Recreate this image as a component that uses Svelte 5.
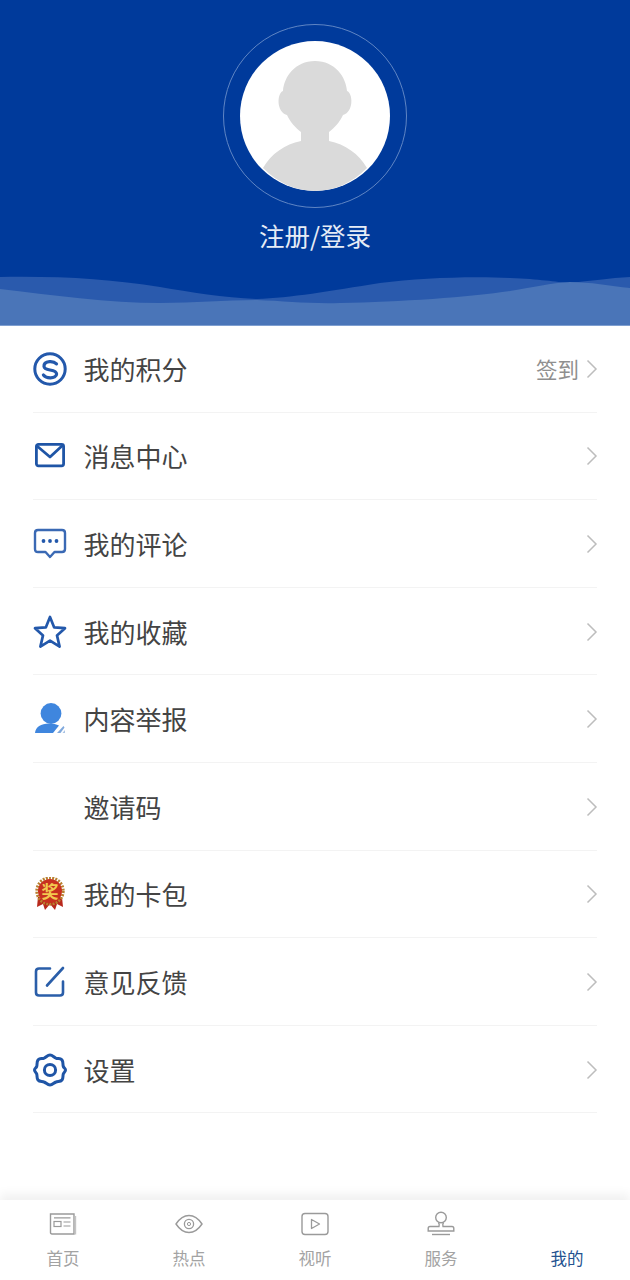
<script lang="ts">
  const rows = [
    { key: "points", label: "我的积分", extra: "签到" },
    { key: "mail", label: "消息中心" },
    { key: "comment", label: "我的评论" },
    { key: "star", label: "我的收藏" },
    { key: "report", label: "内容举报" },
    { key: "none", label: "邀请码" },
    { key: "award", label: "我的卡包" },
    { key: "edit", label: "意见反馈" },
    { key: "gear", label: "设置" },
  ];

  const tabs = [
    { key: "home", label: "首页" },
    { key: "hot", label: "热点" },
    { key: "video", label: "视听" },
    { key: "service", label: "服务" },
    { key: "mine", label: "我的", active: true },
  ];
</script>

<div class="page">
  <header class="hero">
    <svg class="waves" viewBox="0 0 630 50" preserveAspectRatio="none" aria-hidden="true">
      <path fill="#2a5aad" d="M0 2 C60 1 110 4 160 12 C190 17 225 23 257 24 C290 23 330 16 380 8 C420 3 470 1 510 3 C540 4 555 7 570 8 C590 6 610 3 630 2 V50 H0Z" />
      <path fill="#4a75b8" d="M0 14 C50 20 110 28 160 28 C195 28 225 25 257 25 C285 26 310 29 340 28 C400 27 470 22 510 16 C535 12 550 8 570 7 C590 7 610 11 630 13 V50 H0Z" />
    </svg>
    <div class="ring">
      <div class="avatar">
        <svg viewBox="0 0 150 150" aria-hidden="true">
          <path fill="#dadada" d="M75 20 C55 20 44 36 43 50 C37 52 36 71 47 74 C50 81 56 87 61 91 V100 C45 103 31 113 23 127 C38 142 56 150 75 150 C94 150 112 142 127 127 C119 113 105 103 89 100 V91 C94 87 100 81 103 74 C114 71 113 52 107 50 C106 36 95 20 75 20Z" />
        </svg>
      </div>
    </div>
    <div class="login">注册/登录</div>
  </header>

  <ul class="list">
    {#each rows as row}
      <li class="row">
        <span class="icon">
          {#if row.key === "points"}
            <svg viewBox="0 0 34 34" aria-hidden="true">
              <circle cx="17" cy="17" r="15.2" fill="none" stroke="#2358ab" stroke-width="3" />
              <path fill="none" stroke="#2358ab" stroke-width="3.2" stroke-linecap="round" d="M23.5 11.8 C21.5 9.8 18.8 9.4 16.5 9.6 C12.8 10 10.8 12 11 14.4 C11.2 17 14 17.5 17 18 C20.5 18.6 23.6 19.2 23.6 22 C23.6 24.6 20.6 26 17.2 25.9 C14.6 25.8 12 25 10.4 23" />
            </svg>
          {:else if row.key === "mail"}
            <svg viewBox="0 0 34 34" aria-hidden="true">
              <rect x="3.4" y="5.4" width="27.2" height="21.4" rx="2" fill="none" stroke="#1f55a6" stroke-width="2.8" />
              <path fill="none" stroke="#1f55a6" stroke-width="2.8" stroke-linejoin="round" d="M4 7 L17 18 L30 6" />
            </svg>
          {:else if row.key === "comment"}
            <svg viewBox="0 0 34 34" aria-hidden="true">
              <path fill="none" stroke="#3a69b4" stroke-width="2.4" stroke-linejoin="round" d="M5 3 H29 C31 3 32 4 32 6 V22 C32 24 31 25 29 25 H21.5 L17 30 L12.5 25 H5 C3 25 2 24 2 22 V6 C2 4 3 3 5 3Z" />
              <circle cx="10.5" cy="14" r="1.9" fill="#2358ab" />
              <circle cx="17" cy="14" r="1.9" fill="#2358ab" />
              <circle cx="23.5" cy="14" r="1.9" fill="#2358ab" />
            </svg>
          {:else if row.key === "star"}
            <svg viewBox="0 0 34 34" aria-hidden="true">
              <path fill="none" stroke="#2358ab" stroke-width="2.7" stroke-linejoin="round" d="M17 2 L21.2 12.4 L32 13.2 L24 20.4 L26.6 31.6 L17 25.6 L7.4 31.6 L10 20.4 L2 13.2 L12.8 12.4Z" />
            </svg>
          {:else if row.key === "report"}
            <svg viewBox="0 0 34 34" aria-hidden="true">
              <circle cx="18" cy="11.5" r="10.4" fill="#3f86de" />
              <path fill="#3f86de" d="M2 31 C2.5 25 8 21.5 16 21.5 C20 21.5 23.5 22.2 26 23.5 L20 31Z" />
              <path fill="#7fa8dc" d="M24 31 L30.5 24 L31.5 25.5 L27.5 31Z" />
              <path fill="#a9c3e4" d="M29.5 31 L32 28 V31Z" />
            </svg>
          {:else if row.key === "award"}
            <svg viewBox="0 0 34 34" aria-hidden="true">
              <path fill="#b8281c" d="M5 20 L4 30 L10 27 L12 33 L17 27 L22 33 L24 27 L30 30 L29 20Z" />
              <circle cx="17" cy="14" r="13.2" fill="none" stroke="#b9802f" stroke-width="3" stroke-dasharray="2 1.2" />
              <circle cx="17" cy="14" r="12" fill="#c8301f" />
              <text x="17" y="20.5" text-anchor="middle" class="award-text">奖</text>
            </svg>
          {:else if row.key === "edit"}
            <svg viewBox="0 0 34 34" aria-hidden="true">
              <path fill="none" stroke="#2a5ea9" stroke-width="2.6" stroke-linecap="round" d="M17 3.5 H6 C4 3.5 3 4.5 3 6.5 V27.5 C3 29.5 4 30.5 6 30.5 H27 C29 30.5 30 29.5 30 27.5 V16.5" />
              <path fill="none" stroke="#2a5ea9" stroke-width="2.6" stroke-linecap="round" d="M14 20.5 L30 3" />
            </svg>
          {:else if row.key === "gear"}
            <svg viewBox="0 0 34 34" aria-hidden="true">
              <path fill="none" stroke="#1f55a6" stroke-width="3" stroke-linejoin="round" d="M17 2 C19.5 2 21 4.5 23 5.2 C25 5.8 28 5 29 7 C30.5 9 29.6 11.5 30.3 13.5 C31 15 32.5 15.5 32.5 17 C32.5 18.5 31 19.5 30.3 21 C29.6 23 30.5 25 29 27 C27.5 29 25 28.2 23 29 C21 29.7 19.5 32 17 32 C14.5 32 13 29.7 11 29 C9 28.2 6.5 29 5 27 C3.5 25 4.4 23 3.7 21 C3 19.5 1.5 18.5 1.5 17 C1.5 15.5 3 15 3.7 13.5 C4.4 11.5 3.5 9 5 7 C6 5 9 5.8 11 5.2 C13 4.5 14.5 2 17 2Z" />
              <circle cx="17" cy="17" r="5.6" fill="none" stroke="#1f55a6" stroke-width="3" />
            </svg>
          {/if}
        </span>
        <span class="label">{row.label}</span>
        {#if row.extra}
          <span class="extra">{row.extra}</span>
        {/if}
        <svg class="chevron" viewBox="0 0 12 20" aria-hidden="true">
          <path fill="none" stroke="#bdbdbd" stroke-width="1.5" d="M1.5 1.5 L10 10 L1.5 18.5" />
        </svg>
      </li>
    {/each}
  </ul>

  <nav class="tabbar">
    {#each tabs as tab}
      <div class="tab" class:active={tab.active}>
        <span class="tab-icon">
          {#if tab.key === "home"}
            <svg viewBox="0 0 28 24" aria-hidden="true">
              <path fill="none" stroke="#9a9a9a" stroke-width="1.4" d="M1.5 2 H25 V22 H3 C2 22 1.5 21.5 1.5 20.5Z" />
              <path fill="none" stroke="#c4c4c4" stroke-width="1.4" d="M26.5 4 V22.5" />
              <rect x="5" y="9.5" width="7" height="5" fill="none" stroke="#9a9a9a" stroke-width="1.2" />
              <path fill="none" stroke="#9a9a9a" stroke-width="1.2" d="M5 5.8 H21.5 M14.5 10 H21.5 M14.5 14 H21.5" />
            </svg>
          {:else if tab.key === "hot"}
            <svg viewBox="0 0 28 24" aria-hidden="true">
              <path fill="none" stroke="#9a9a9a" stroke-width="1.4" d="M1 12 C5 6 9 3.5 14 3.5 C19 3.5 23 6 27 12 C23 18 19 20.5 14 20.5 C9 20.5 5 18 1 12Z" />
              <circle cx="14" cy="12" r="4.6" fill="none" stroke="#9a9a9a" stroke-width="1.3" />
              <circle cx="14" cy="12" r="1.6" fill="none" stroke="#9a9a9a" stroke-width="1" />
            </svg>
          {:else if tab.key === "video"}
            <svg viewBox="0 0 28 24" aria-hidden="true">
              <rect x="1" y="1.5" width="26" height="21" rx="3" fill="none" stroke="#9a9a9a" stroke-width="1.4" />
              <path fill="none" stroke="#9a9a9a" stroke-width="1.3" stroke-linejoin="round" d="M10.5 7.5 L18.5 12 L10.5 16.5Z" />
            </svg>
          {:else if tab.key === "service"}
            <svg viewBox="0 0 28 26" aria-hidden="true">
              <circle cx="14" cy="6.5" r="5.3" fill="none" stroke="#9a9a9a" stroke-width="1.4" />
              <path fill="none" stroke="#9a9a9a" stroke-width="1.4" d="M11.5 11.5 C12.5 13 12.5 14 12 15.5 H3 C1.8 15.5 1.2 16.2 1.2 17.5 V20 H26.8 V17.5 C26.8 16.2 26.2 15.5 25 15.5 H16 C15.5 14 15.5 13 16.5 11.5" />
              <path fill="none" stroke="#9a9a9a" stroke-width="1.4" d="M5 23.5 H23" />
            </svg>
          {/if}
        </span>
        <span class="tab-label">{tab.label}</span>
      </div>
    {/each}
  </nav>
</div>

<style>
  :global(body) {
    margin: 0;
    background: #fff;
  }

  .page {
    display: flex;
    flex-direction: column;
    height: 1280px;
    overflow: hidden;
    font-family: "Noto Sans CJK SC", "Noto Sans", sans-serif;
    background: #fff;
  }

  .hero {
    position: relative;
    display: flex;
    flex-direction: column;
    align-items: center;
    flex: none;
    box-sizing: border-box;
    height: 325px;
    padding-top: 24px;
    background: #003a9b;
    box-shadow: 0 1px 0 #7f9fd0;
  }

  .waves {
    position: absolute;
    left: 0;
    bottom: 0;
    width: 100%;
    height: 50px;
    display: block;
  }

  .ring {
    display: flex;
    align-items: center;
    justify-content: center;
    box-sizing: border-box;
    width: 184px;
    height: 184px;
    border: 1px solid #5f85c4;
    border-radius: 50%;
  }

  .avatar {
    width: 150px;
    height: 150px;
    border-radius: 50%;
    overflow: hidden;
    background: #fff;
  }

  .avatar svg {
    display: block;
    width: 150px;
    height: 150px;
  }

  .login {
    margin-top: 9px;
    color: #e6ecf6;
    font-size: 25.5px;
    line-height: 36px;
  }

  .list {
    margin: 0;
    padding: 0 33px;
    list-style: none;
  }

  .row {
    display: flex;
    align-items: center;
    box-sizing: border-box;
    height: 87.6px;
    padding-top: 1px;
    border-bottom: 1px solid #f3f3f3;
  }

  .icon {
    flex: none;
    width: 34px;
    height: 34px;
    margin-right: 17px;
  }

  .icon svg {
    display: block;
    width: 34px;
    height: 34px;
  }

  .award-text {
    fill: #f2c84f;
    font-size: 17px;
    font-weight: 700;
  }

  .label {
    flex: 1;
    margin-left: -0.5px;
    color: #444;
    font-size: 26px;
    line-height: 36px;
  }

  .extra {
    margin-right: 7px;
    color: #8f8f8f;
    font-size: 21.5px;
    line-height: 30px;
  }

  .chevron {
    flex: none;
    width: 12px;
    height: 20px;
    margin-right: -1px;
  }

  .tabbar {
    position: relative;
    display: grid;
    grid-template-columns: repeat(5, 1fr);
    margin-top: auto;
    height: 80px;
    background: #fff;
    box-shadow: 0 -6px 10px rgba(0, 0, 0, 0.06);
  }

  .tab {
    display: flex;
    flex-direction: column;
    align-items: center;
    padding-top: 11px;
  }

  .tab-icon {
    display: block;
    width: 28px;
    height: 26px;
  }

  .tab-icon svg {
    display: block;
    width: 28px;
    height: 26px;
  }

  .tab-label {
    margin-top: 9px;
    color: #a3a3a3;
    font-size: 16.5px;
    line-height: 24px;
  }

  .tab.active .tab-label {
    color: #24528f;
  }
</style>
